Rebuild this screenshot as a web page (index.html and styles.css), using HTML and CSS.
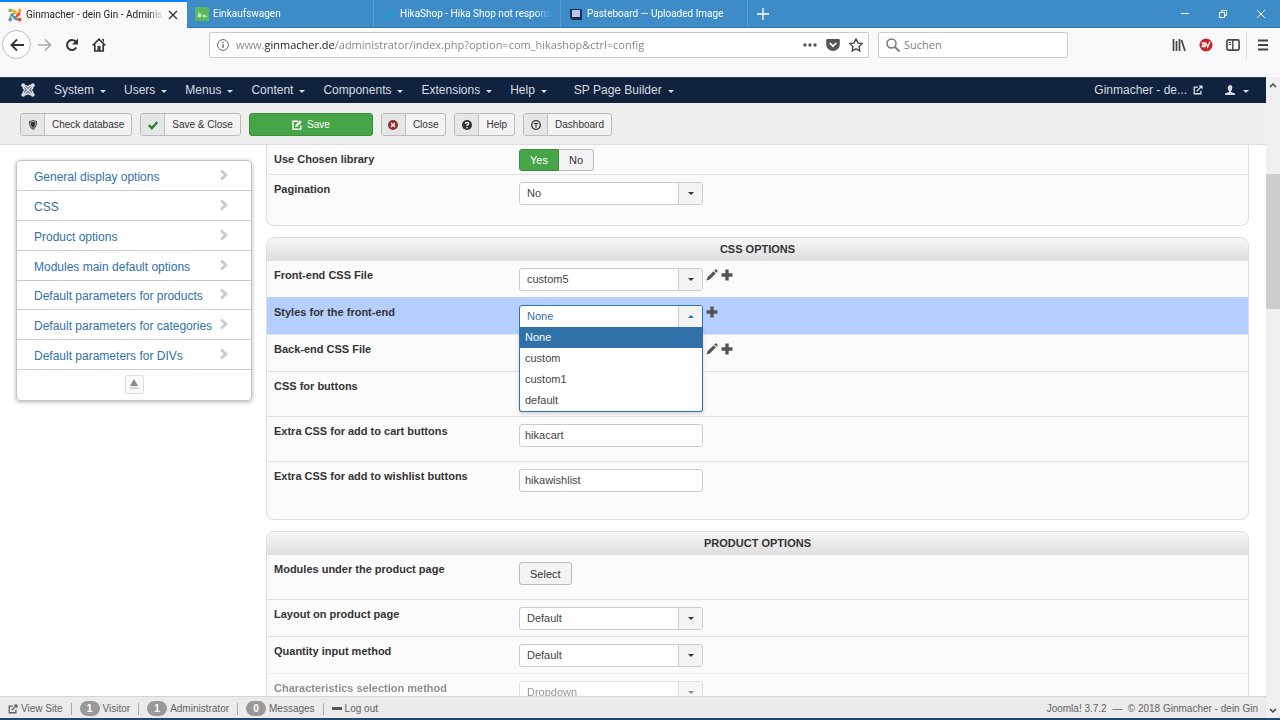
FILE: index.html
```html
<!DOCTYPE html>
<html lang="en">
<head>
    <meta charset="UTF-8">
    <meta name="viewport" content="width=device-width, initial-scale=1.0">
    <title>Ginmacher - dein Gin - Administration</title>
    <link rel="stylesheet" href="styles.css">
</head>
<body>

    <!-- Shared icons -->
    <svg class="sprite" aria-hidden="true">
        <symbol id="joomla" viewBox="0 0 16 16">
            <g fill="none" stroke="currentColor" stroke-width="1.700">
                <path d="M3 3l10 10M13 3L3 13"/>
                <path d="M3 4.500Q5.500 1.500 8 4.500Q10.500 1.500 13 3.500M3 3.500Q1.500 5.500 4.500 8Q1.500 10.500 3 12.500Q5.500 14.500 8 11.500Q10.500 14.500 13 12.500Q14.500 10.500 11.500 8Q14.500 5.500 13 3.500"/>
            </g>
            <g fill="currentColor"><circle cx="2.500" cy="2.500" r="2.200"/><circle cx="13.500" cy="2.500" r="2.200"/><circle cx="2.500" cy="13.500" r="2.200"/><circle cx="13.500" cy="13.500" r="2.200"/></g>
        </symbol>
        <symbol id="external" viewBox="0 0 12 12">
            <path d="M6 2.500H1.500v8h8V7M4.500 7.500l5-5" fill="none" stroke="currentColor" stroke-width="1.600"/>
            <path d="M6.500 0.500h5v5z" fill="currentColor"/>
        </symbol>
        <symbol id="pencil" viewBox="0 0 12 12">
            <path d="M0.500 11.500l1-3.300 6-6 2.300 2.300-6 6zM8.200 1.500l1-1q.6-.4 1.200.1l1 1q.5.600.1 1.200l-1 1z" fill="currentColor"/>
        </symbol>
        <symbol id="plus" viewBox="0 0 12 12">
            <path d="M4.300 0.500h3.400v3.800h3.800v3.400H7.700v3.800H4.300V7.700H.5V4.300h3.800z" fill="currentColor"/>
        </symbol>
        <symbol id="chevron" viewBox="0 0 10 12">
            <path d="M1 2.500L3 .5 9 6l-6 5.500-2-2L4.800 6z" fill="currentColor"/>
        </symbol>
    </svg>

    <!-- Browser tabs -->
    <div class="tabs">
        <div class="tab tab-active">
            <svg class="icon-14" viewBox="0 0 16 16">
                <g fill="none" stroke-width="2.400">
                    <path d="M3 12V9.500L9.500 3.500" stroke="#7ac143"/>
                    <path d="M4 3h2.500L12.500 9.500" stroke="#f9a541"/>
                    <path d="M13 4v2.500L6.500 12.500" stroke="#f44321"/>
                    <path d="M12 13H9.500L3.500 6.500" stroke="#5091cd"/>
                </g>
                <circle cx="2.600" cy="2.800" r="2.100" fill="#7ac143"/><circle cx="13.400" cy="2.800" r="2.100" fill="#f9a541"/>
                <circle cx="2.600" cy="13.200" r="2.100" fill="#5091cd"/><circle cx="13.400" cy="13.200" r="2.100" fill="#f44321"/>
            </svg>
            <span class="tab-title">Ginmacher - dein Gin - Adminis</span>
            <button class="plain" aria-label="Close tab">
                <svg class="icon-10" viewBox="0 0 10 10"><path d="M1 1l8 8M9 1L1 9" fill="none" stroke="#333" stroke-width="1.300"/></svg>
            </button>
        </div>
        <div class="tab">
            <svg class="icon-14" viewBox="0 0 14 14"><rect width="14" height="14" rx="1" fill="#5cb85c"/><path d="M3 7h3v3H3zM8 8h2v2H8zM11 9h1v1h-1zM4 4v3" fill="#bfe8bf" stroke="#bfe8bf" stroke-width=".6"/></svg>
            <span class="tab-title">Einkaufswagen</span>
        </div>
        <div class="tab">
            <svg class="icon-14" viewBox="0 0 14 14"><path d="M7 2l2 4h3l-2 2 1 3H3l1-3-2-2h3z" fill="#2c97bd"/></svg>
            <span class="tab-title">HikaShop - Hika Shop not respons</span>
        </div>
        <div class="tab">
            <svg class="icon-14" viewBox="0 0 14 14"><path d="M1 2h11l1 1v10H3l-2-2z" fill="#1c3057"/><path d="M3 3h8v7H3z" fill="#b6c4e6"/></svg>
            <span class="tab-title">Pasteboard — Uploaded Image</span>
        </div>
        <button class="plain new-tab" aria-label="New tab">
            <svg class="icon-12" viewBox="0 0 12 12"><path d="M6 0v12M0 6h12" stroke="#fff" stroke-width="1.300"/></svg>
        </button>
        <div class="window-buttons">
            <button class="plain" aria-label="Minimize"><svg class="icon-10" viewBox="0 0 10 10"><path d="M1 4.500h8" stroke="#fff"/></svg></button>
            <button class="plain" aria-label="Restore"><svg class="icon-10" viewBox="0 0 10 10"><path d="M1.500 3.500h5v5h-5zM3.500 3.500v-2h5v5h-2" fill="none" stroke="#fff"/></svg></button>
            <button class="plain" aria-label="Close"><svg class="icon-10" viewBox="0 0 10 10"><path d="M1 1l8 8M9 1L1 9" stroke="#fff"/></svg></button>
        </div>
    </div>

    <!-- Browser address bar -->
    <div class="browser-bar">
        <div class="browser-nav">
            <button class="plain back" aria-label="Back"><svg class="icon-14" viewBox="0 0 14 14"><path d="M14 7H1.500M7 1.500L1.500 7 7 12.500" fill="none" stroke="#333" stroke-width="1.800"/></svg></button>
            <button class="plain" aria-label="Forward"><svg class="icon-14" viewBox="0 0 14 14"><path d="M0 7h12.500M7 1.500L12.500 7 7 12.500" fill="none" stroke="#aaa" stroke-width="1.600"/></svg></button>
            <button class="plain" aria-label="Reload"><svg class="icon-14" viewBox="0 0 14 14"><path d="M11.300 9.500A5 5 0 1 1 10.500 3.500" fill="none" stroke="#333" stroke-width="2"/><path d="M13 .5v6H7z" fill="#333"/></svg></button>
            <button class="plain" aria-label="Home"><svg class="icon-14" viewBox="0 0 14 14"><path d="M.7 7.500L7 1.200l6.300 6.300M2.800 6.500v6.500h8.400V6.500" fill="none" stroke="#333" stroke-width="1.700"/><path d="M5.500 8h3v5h-3zM10 1h2v4z" fill="#333"/></svg></button>
        </div>
        <div class="field url">
            <svg class="icon-12" viewBox="0 0 12 12"><circle cx="6" cy="6" r="5.400" fill="none" stroke="#666"/><path d="M6 5v4M6 2.800v1.300" stroke="#666" stroke-width="1.300"/></svg>
            <input type="text" class="url-input" aria-label="Address" value="www.ginmacher.de/administrator/index.php?option=com_hikashop&amp;ctrl=config">
            <button class="plain" aria-label="Page actions"><svg class="icon-14" viewBox="0 0 14 14"><g fill="#555"><circle cx="2" cy="7" r="1.700"/><circle cx="7" cy="7" r="1.700"/><circle cx="12" cy="7" r="1.700"/></g></svg></button>
            <button class="plain" aria-label="Save to Pocket"><svg class="icon-14" viewBox="0 0 14 14"><path d="M1.500 1h11q1.300 0 1.300 1.300V6.500a6.800 6.500 0 0 1-13.600 0V2.300Q.2 1 1.500 1z" fill="#555"/><path d="M3.700 5L7 8.200 10.300 5" fill="none" stroke="#fff" stroke-width="1.700"/></svg></button>
            <button class="plain" aria-label="Bookmark"><svg class="icon-14" viewBox="0 0 14 14"><path d="M7 1l1.900 3.900 4.300.6-3.100 3 .7 4.300L7 10.800l-3.800 2 .7-4.300-3.100-3 4.300-.6z" fill="none" stroke="#444" stroke-width="1.400"/></svg></button>
        </div>
        <div class="field search">
            <svg class="icon-14" viewBox="0 0 14 14"><circle cx="5.500" cy="5.500" r="4.500" fill="none" stroke="#777" stroke-width="1.500"/><path d="M9 9l4.500 4.500" stroke="#777" stroke-width="1.800"/></svg>
            <input type="text" aria-label="Search" placeholder="Suchen">
        </div>
        <div class="browser-tools">
            <button class="plain" aria-label="Library"><svg class="icon-14" viewBox="0 0 14 14"><path d="M1.500 1v12M4.500 3v10M7.500 1v12M9.500 2l3.500 11" fill="none" stroke="#444" stroke-width="1.700"/></svg></button>
            <button class="plain" aria-label="Blocker"><svg class="icon-14" viewBox="0 0 14 14"><circle cx="7" cy="7" r="6.500" fill="#c8232c"/><path d="M2.500 5H6v3.500H2.500M3 6.800h3M7 5l1.700 4L11 3.500" fill="none" stroke="#fff" stroke-width="1.300"/></svg></button>
            <button class="plain" aria-label="Sidebars"><svg class="icon-14" viewBox="0 0 14 14"><rect x=".9" y="1.900" width="12.200" height="10.200" rx="1.500" fill="none" stroke="#444" stroke-width="1.600"/><path d="M6.800 2v10" stroke="#444" stroke-width="1.400"/><path d="M2.700 4.500h2.500M2.700 6.500h2.500" stroke="#444"/></svg></button>
            <button class="plain menu" aria-label="Menu"><svg class="icon-12" viewBox="0 0 12 12"><path d="M1 1.500h10M1 6h10M1 10.500h10" stroke="#444" stroke-width="1.800"/></svg></button>
        </div>
    </div>

    <div class="viewport">
        <div class="page">

            <!-- Joomla menu -->
            <nav class="admin-nav">
                <a href="#" class="brand" aria-label="Joomla"><svg class="icon-14"><use href="#joomla"/></svg></a>
                <a href="#" class="caret">System</a>
                <a href="#" class="caret">Users</a>
                <a href="#" class="caret">Menus</a>
                <a href="#" class="caret">Content</a>
                <a href="#" class="caret">Components</a>
                <a href="#" class="caret">Extensions</a>
                <a href="#" class="caret">Help</a>
                <a href="#" class="caret builder">SP Page Builder</a>
                <a href="#" class="site-link">Ginmacher - de... <svg class="icon-10"><use href="#external"/></svg></a>
                <a href="#" class="caret user" aria-label="User"><svg class="icon-10" viewBox="0 0 10 10"><path d="M5 0q2.300 0 2.300 2.800T6 6v1l4 1.500V10H0V8.500L4 7V6Q2.700 5 2.700 2.800T5 0z" fill="currentColor"/></svg></a>
            </nav>

            <!-- Actions -->
            <div class="toolbar">
                <button class="action"><span class="action-icon"><svg class="icon-10" viewBox="0 0 10 10"><path d="M5 0l4 1.200q.3 6-4 8.800Q.7 7.200 1 1.200z" fill="#333"/><path d="M5 1.300l2.900.8Q8 6.500 5 8.600 2 6.500 2.100 2.100z" fill="none" stroke="#ddd" stroke-width=".7"/></svg></span>Check database</button>
                <button class="action"><span class="action-icon"><svg class="icon-10" viewBox="0 0 10 10"><path d="M.8 5.200l3 3L9.300 2" fill="none" stroke="#378137" stroke-width="2.400"/></svg></span>Save &amp; Close</button>
                <button class="action action-save"><svg class="icon-10" viewBox="0 0 10 10"><path d="M6 1.200H1v7.900h7.800V5.500" fill="none" stroke="#fff" stroke-width="1.400"/><path d="M3.200 7l.5-2.200L8 .3 9.800 2 5.400 6.500z" fill="#fff"/></svg>Save</button>
                <button class="action"><span class="action-icon"><svg class="icon-10" viewBox="0 0 10 10"><circle cx="5" cy="5" r="5" fill="#942a25"/><path d="M3 3l4 4M7 3L3 7" stroke="#fff" stroke-width="1.500"/></svg></span>Close</button>
                <button class="action"><span class="action-icon"><svg class="icon-10" viewBox="0 0 10 10"><circle cx="5" cy="5" r="5" fill="#333"/><path d="M3.400 3.800Q3.500 2.300 5 2.300t1.600 1.400Q6.600 4.700 5 5.200v.9M5 6.900v1.300" fill="none" stroke="#fff" stroke-width="1.300"/></svg></span>Help</button>
                <button class="action"><span class="action-icon"><svg class="icon-10" viewBox="0 0 10 10"><circle cx="5" cy="5" r="4.300" fill="none" stroke="#333" stroke-width="1.300"/><path d="M5 4v3.500M2.800 3.500h4.400" stroke="#333" stroke-width="1.100"/></svg></span>Dashboard</button>
            </div>

            <div class="content">

                <nav class="side-menu">
                    <a href="#">General display options <svg class="side-chevron"><use href="#chevron"/></svg></a>
                    <a href="#">CSS <svg class="side-chevron"><use href="#chevron"/></svg></a>
                    <a href="#">Product options <svg class="side-chevron"><use href="#chevron"/></svg></a>
                    <a href="#">Modules main default options <svg class="side-chevron"><use href="#chevron"/></svg></a>
                    <a href="#">Default parameters for products <svg class="side-chevron"><use href="#chevron"/></svg></a>
                    <a href="#">Default parameters for categories <svg class="side-chevron"><use href="#chevron"/></svg></a>
                    <a href="#">Default parameters for DIVs <svg class="side-chevron"><use href="#chevron"/></svg></a>
                    <div class="side-top">
                        <button class="top-button" aria-label="Back to top"><svg class="icon-10" viewBox="0 0 10 10"><path d="M5 0l4 7H1z" fill="#888"/><path d="M1 9h8" stroke="#aaa"/></svg></button>
                    </div>
                </nav>

                <main class="options">

                    <section class="panel panel-first">
                        <div class="row">
                            <span class="label">Use Chosen library</span>
                            <div class="switch">
                                <input type="radio" name="chosen" id="chosenYes" checked><label for="chosenYes">Yes</label>
                                <input type="radio" name="chosen" id="chosenNo"><label for="chosenNo">No</label>
                            </div>
                        </div>
                        <div class="row">
                            <label class="label" for="pagination">Pagination</label>
                            <div class="chosen"><select id="pagination"><option>No</option></select></div>
                        </div>
                    </section>

                    <section class="panel">
                        <h2>CSS OPTIONS</h2>
                        <div class="row">
                            <label class="label" for="frontCss">Front-end CSS File</label>
                            <div class="chosen"><select id="frontCss"><option>custom5</option></select></div>
                            <div class="row-tools">
                                <button class="plain" aria-label="Edit"><svg class="icon-12"><use href="#pencil"/></svg></button>
                                <button class="plain" aria-label="Add"><svg class="icon-12"><use href="#plus"/></svg></button>
                            </div>
                        </div>
                        <div class="row row-active">
                            <label class="label" for="frontStyles">Styles for the front-end</label>
                            <div class="chosen chosen-open">
                                <select id="frontStyles"><option>None</option><option>custom</option><option>custom1</option><option>default</option></select>
                                <ul class="chosen-list" role="listbox" aria-label="Styles for the front-end">
                                    <li role="option" aria-selected="true" class="selected">None</li>
                                    <li role="option">custom</li>
                                    <li role="option">custom1</li>
                                    <li role="option">default</li>
                                </ul>
                            </div>
                            <div class="row-tools">
                                <button class="plain" aria-label="Add"><svg class="icon-12"><use href="#plus"/></svg></button>
                            </div>
                        </div>
                        <div class="row">
                            <label class="label" for="backCss">Back-end CSS File</label>
                            <div class="chosen"><select id="backCss"><option>default</option></select></div>
                            <div class="row-tools">
                                <button class="plain" aria-label="Edit"><svg class="icon-12"><use href="#pencil"/></svg></button>
                                <button class="plain" aria-label="Add"><svg class="icon-12"><use href="#plus"/></svg></button>
                            </div>
                        </div>
                        <div class="row row-tall">
                            <label class="label" for="buttonCss">CSS for buttons</label>
                            <input type="text" class="text-input" id="buttonCss">
                        </div>
                        <div class="row row-tall">
                            <label class="label" for="cartCss">Extra CSS for add to cart buttons</label>
                            <input type="text" class="text-input" id="cartCss" value="hikacart">
                        </div>
                        <div class="row row-tall">
                            <label class="label" for="wishlistCss">Extra CSS for add to wishlist buttons</label>
                            <input type="text" class="text-input" id="wishlistCss" value="hikawishlist">
                        </div>
                    </section>

                    <section class="panel">
                        <h2>PRODUCT OPTIONS</h2>
                        <div class="row row-tall">
                            <label class="label" for="modules">Modules under the product page</label>
                            <button class="select-button" id="modules">Select</button>
                        </div>
                        <div class="row">
                            <label class="label" for="layout">Layout on product page</label>
                            <div class="chosen"><select id="layout"><option>Default</option></select></div>
                        </div>
                        <div class="row">
                            <label class="label" for="quantity">Quantity input method</label>
                            <div class="chosen"><select id="quantity"><option>Default</option></select></div>
                        </div>
                        <div class="row row-faded">
                            <label class="label" for="characteristics">Characteristics selection method</label>
                            <div class="chosen"><select id="characteristics"><option>Dropdown</option></select></div>
                        </div>
                    </section>

                </main>
            </div>

            <!-- Status bar -->
            <footer class="status">
                <a href="#"><svg class="icon-10"><use href="#external"/></svg> View Site</a>
                <span class="status-item"><span class="badge">1</span>Visitor</span>
                <span class="status-item"><span class="badge">1</span>Administrator</span>
                <span class="status-item"><span class="badge">0</span>Messages</span>
                <a href="#" class="status-item"><span class="dash"></span>Log out</a>
                <span class="copyright">Joomla! 3.7.2 &nbsp;—&nbsp; © 2018 Ginmacher - dein Gin</span>
            </footer>
        </div>

        <div class="scrollbar">
            <svg class="scroll-arrow" viewBox="0 0 14 16"><path d="M4 10l3-3 3 3" fill="none" stroke="#444" stroke-width="1.500"/></svg>
            <div class="scroll-before"></div>
            <div class="scroll-thumb"></div>
            <div class="scroll-after"></div>
            <svg class="scroll-arrow" viewBox="0 0 14 16"><path d="M4 7l3 3 3-3" fill="none" stroke="#444" stroke-width="1.500"/></svg>
        </div>
    </div>

</body>
</html>
```

FILE: styles.css
```css
* {
    box-sizing: border-box;
}
body {
    margin: 0;
    height: 100vh;
    display: flex;
    flex-direction: column;
    overflow: hidden;
    font-family: "Liberation Sans", Arial, sans-serif;
    font-size: 11px;
    line-height: 14px;
    color: #333;
    background-color: #fff;
    border-bottom: 2px solid #23486b;
}
a {
    color: inherit;
    text-decoration: none;
}
input, button, select {
    font: inherit;
    color: inherit;
    margin: 0;
}
svg {
    flex: none;
}
.sprite {
    position: absolute;
    width: 0;
    height: 0;
}
.icon-10 {
    width: 10px;
    height: 10px;
}
.icon-12 {
    width: 12px;
    height: 12px;
}
.icon-14 {
    width: 14px;
    height: 14px;
}
.plain {
    display: flex;
    align-items: center;
    justify-content: center;
    padding: 0;
    border: none;
    background: none;
}

/* Browser */
.tabs {
    display: flex;
    height: 28px;
    background-color: #3d8cc8;
    border-bottom: 1px solid #3878a8;
    color: #fff;
    font-family: Roboto, "Open Sans", sans-serif;
    font-size: 10px;
}
.tab {
    display: flex;
    align-items: center;
    gap: 4px;
    width: 187px;
    padding: 1px 9px 0 8px;
    border-right: 1px solid #5a9dd1;
}
.tab-active {
    height: 28px;
    padding-top: 0;
    background-color: #f9f9fa;
    border-top: 2px solid #0a84ff;
    border-right: none;
    color: #222;
}
.tab-title {
    flex: 1;
    overflow: hidden;
    white-space: nowrap;
    -webkit-mask-image: linear-gradient(to left, transparent, #000 16px);
    mask-image: linear-gradient(to left, transparent, #000 16px);
}
.new-tab {
    width: 30px;
}
.window-buttons {
    display: flex;
    gap: 28px;
    margin-left: auto;
    padding-right: 14px;
}
.browser-bar {
    display: flex;
    align-items: center;
    height: 49px;
    padding-bottom: 16px;
    background-color: #f9f9fb;
    font-family: "Open Sans", "Noto Sans", sans-serif;
    font-size: 11px;
}
.browser-nav {
    display: flex;
    align-items: center;
    margin: 0 97px 0 2px;
}
.browser-nav .plain {
    width: 27px;
    height: 29px;
}
.browser-nav .back {
    width: 29px;
    border: 1px solid #bbb;
    border-radius: 50%;
    background-color: #fff;
}
.field {
    display: flex;
    align-items: center;
    gap: 9px;
    height: 26px;
    padding: 0 5px 0 7px;
    background-color: #fff;
    border: 1px solid #ccc;
    border-radius: 2px;
}
.field input {
    flex: 1;
    min-width: 0;
    padding: 0;
    border: none;
    outline: none;
    background-color: transparent;
}
.url {
    flex: 1;
}
.url .icon-12 {
    margin-right: -2px;
}
.field .url-input {
    background-image: linear-gradient(to right, #808080 28px, #1a1a1a 28px, #1a1a1a 99px, #808080 99px);
    -webkit-background-clip: text;
    background-clip: text;
    -webkit-text-fill-color: transparent;
}
.search {
    width: 190px;
    margin: 0 97px 0 9px;
    gap: 4px;
}
.search input::placeholder {
    color: #808080;
}
.browser-tools {
    display: flex;
}
.browser-tools .plain {
    width: 27px;
    height: 28px;
}
.browser-tools .menu {
    width: 34px;
    border-left: 1px solid #ddd;
    padding-right: 2px;
}

/* Joomla */
.viewport {
    flex: 1;
    min-height: 0;
    display: flex;
}
.page {
    flex: 1;
    min-width: 0;
    display: flex;
    flex-direction: column;
}
.admin-nav {
    display: flex;
    align-items: center;
    gap: 18px;
    height: 26px;
    flex: none;
    padding: 0 17px 2px 21px;
    background-color: #10223e;
    border-top: 1px solid #2a4468;
    color: #d9dde3;
    font-size: 12px;
}
.admin-nav a {
    display: flex;
    align-items: center;
    gap: 6px;
}
.brand {
    margin-right: 1px;
}
.caret::after {
    content: "";
    margin-top: 3px;
    border: 3px solid transparent;
    border-top-color: currentColor;
    border-bottom: none;
}
.admin-nav .builder {
    margin-left: 9px;
}
.site-link {
    margin-left: auto;
}
.admin-nav .user {
    gap: 8px;
    margin-left: 4px;
}
.toolbar {
    display: flex;
    align-items: center;
    gap: 8px;
    height: 42px;
    flex: none;
    padding: 2px 20px 0;
    background-color: #efefef;
    border-bottom: 1px solid #ddd;
}
.action {
    display: flex;
    align-items: center;
    gap: 7px;
    height: 23px;
    padding: 0 7px 0 0;
    background-color: #f3f3f3;
    border: 1px solid #bbb;
    border-radius: 3px;
    font-size: 10px;
    overflow: hidden;
}
.action-icon {
    display: flex;
    align-items: center;
    justify-content: center;
    width: 24px;
    height: 21px;
    background-color: #e6e6e6;
    border-right: 1px solid #c0c0c0;
}
.action-save {
    justify-content: center;
    gap: 5px;
    width: 124px;
    padding: 0;
    background-color: #46a546;
    border-color: #3c8f3c;
    color: #fff;
}
.content {
    flex: 1;
    min-height: 0;
    display: flex;
    align-items: flex-start;
    gap: 14px;
    padding: 0 17px 0 16px;
    overflow: hidden;
}
.side-menu {
    display: grid;
    grid-auto-rows: 1fr;
    width: 236px;
    height: 241px;
    flex: none;
    margin-top: 15px;
    border: 1px solid #c4c4c4;
    border-radius: 4px;
    box-shadow: 0 1px 4px rgba(0, 0, 0, 0.3);
    color: #3071a9;
    font-size: 12px;
}
.side-menu a {
    display: flex;
    align-items: center;
    justify-content: space-between;
    padding: 3px 22px 0 17px;
    border-bottom: 1px solid #ccc;
}
.side-chevron {
    width: 10px;
    height: 12px;
    margin-bottom: 4px;
    color: #ccc;
}
.side-top {
    display: flex;
    align-items: center;
    justify-content: center;
    padding-bottom: 2px;
}
.top-button {
    display: flex;
    align-items: center;
    justify-content: center;
    width: 19px;
    height: 19px;
    padding: 0;
    background-color: #f9f9f9;
    border: 1px solid #ddd;
    border-radius: 2px;
}

/* Option panels */
.options {
    flex: 1;
    min-width: 0;
}
.panel {
    margin-bottom: 11px;
    padding-bottom: 13px;
    background-color: #fbfbfb;
    border: 1px solid #ddd;
    border-radius: 8px;
}
.panel-first {
    padding-bottom: 14px;
    border-top: none;
    border-radius: 0 0 8px 8px;
}
.panel h2 {
    margin: 0;
    padding: 4px 0 5px;
    border-radius: 8px 8px 0 0;
    background-image: linear-gradient(#f6f6f6, #dedede);
    font-size: 11px;
    line-height: 14px;
    text-align: center;
}
.row {
    display: flex;
    align-items: flex-start;
    padding: 7px 7px 6px;
    border-top: 1px solid #e2e2e2;
}
h2 + .row, .panel-first .row:first-child {
    border-top: none;
}
.row-tall {
    padding-bottom: 14px;
}
.row-active {
    border-color: #b5d0ff;
    background-color: #b5d0ff;
}
.row-faded {
    opacity: 0.55;
}
.label {
    width: 245px;
    flex: none;
    font-weight: bold;
}
.chosen {
    position: relative;
    width: 184px;
}
.chosen::before {
    content: "";
    position: absolute;
    top: 1px;
    right: 1px;
    bottom: 1px;
    width: 23px;
    background-color: #f3f3f3;
    border-left: 1px solid #ccc;
    border-radius: 0 2px 2px 0;
    pointer-events: none;
}
.chosen::after {
    content: "";
    position: absolute;
    top: 10px;
    right: 9px;
    border: 3px solid transparent;
    border-top-color: #333;
    border-bottom: none;
    pointer-events: none;
}
.chosen select, .text-input {
    display: block;
    width: 184px;
    height: 23px;
    padding: 0 7px 2px;
    background-color: #fff;
    border: 1px solid #ccc;
    border-radius: 3px;
    color: #444;
    appearance: none;
}
.text-input {
    padding: 0 5px 2px;
}
.chosen-open select {
    border-color: #3071a9;
    border-radius: 3px 3px 0 0;
    color: #3071a9;
}
.chosen-open::after {
    border-top: none;
    border-bottom: 3px solid #3071a9;
}
.chosen-list {
    position: absolute;
    top: 22px;
    left: 0;
    z-index: 1;
    width: 184px;
    margin: 0;
    padding: 0;
    list-style: none;
    background-color: #fff;
    border: 1px solid #3071a9;
    border-top: none;
    border-radius: 0 0 3px 3px;
    box-shadow: 0 2px 4px rgba(0, 0, 0, 0.15);
    color: #444;
    line-height: 21px;
}
.chosen-list li {
    padding: 0 5px;
}
.chosen-list .selected {
    background-color: #3071a9;
    color: #fff;
}
.row-tools {
    display: flex;
    gap: 3px;
    height: 14px;
    padding-left: 3px;
    color: #555;
}
.switch {
    display: flex;
    margin: -3px 0;
}
.switch input {
    position: absolute;
    opacity: 0;
}
.switch label {
    padding: 3px 10px;
    background-color: #f3f3f3;
    border: 1px solid #bbb;
    border-left: none;
    border-radius: 0 3px 3px 0;
}
.switch input:checked + label {
    background-color: #46a546;
    border: 1px solid #3c8f3c;
    border-radius: 3px 0 0 3px;
    color: #fff;
}
.select-button {
    height: 23px;
    padding: 0 10px;
    background-color: #f3f3f3;
    border: 1px solid #bbb;
    border-radius: 3px;
}

/* Status bar */
.status {
    display: flex;
    align-items: center;
    gap: 8px;
    height: 22px;
    flex: none;
    padding: 2px 8px 0 8px;
    background-color: #ebebeb;
    border-top: 1px solid #d5d5d5;
    color: #626262;
    font-size: 10px;
}
.status a, .status-item {
    display: flex;
    align-items: center;
    gap: 3px;
}
.status .status-item {
    padding-left: 8px;
    border-left: 1px solid #aaa;
    line-height: 12px;
}
.status .badge {
    width: 20px;
    margin: -2px 0;
    border-radius: 8px;
    background-color: #999;
    color: #fff;
    font-weight: bold;
    line-height: 15px;
    text-align: center;
}
.dash {
    width: 10px;
    height: 3px;
    background-color: #555;
}
.copyright {
    margin-left: auto;
}
.scrollbar {
    display: flex;
    flex-direction: column;
    width: 14px;
    background-color: #f0f0f0;
}
.scroll-arrow {
    width: 14px;
    height: 16px;
}
.scroll-before {
    flex: 81;
}
.scroll-thumb {
    flex: 135;
    background-color: #cdcdcd;
}
.scroll-after {
    flex: 393;
}
```
